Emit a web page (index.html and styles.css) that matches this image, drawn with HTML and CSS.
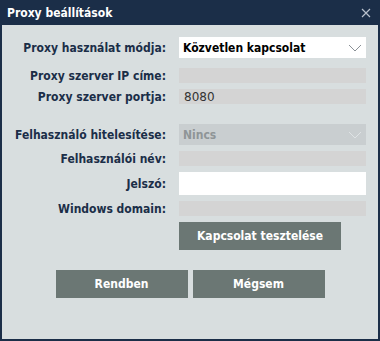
FILE: index.html
```html
<!DOCTYPE html>
<html>
<head>
<meta charset="utf-8">
<link rel="stylesheet" href="styles.css">
</head>
<body>
<div class="window">
  <div class="titlebar">
    <span class="title">Proxy beállítások</span>
    <svg class="close" width="10" height="10" viewBox="0 0 10 10"><path d="M1 1L9 9M9 1L1 9" stroke="#b8c0cc" stroke-width="1.2" fill="none"/></svg>
  </div>
  <div class="content">
    <div class="row first">
      <div class="label">Proxy használat módja:</div>
      <div class="select"><span>Közvetlen kapcsolat</span><svg class="chev" width="14" height="8" viewBox="0 0 14 8"><path d="M1 1L7 7L13 1" stroke="#8a9096" stroke-width="1" fill="none"/></svg></div>
    </div>
    <div class="row wide-gap-before">
      <div class="label">Proxy szerver IP címe:</div>
      <div class="field"></div>
    </div>
    <div class="row">
      <div class="label">Proxy szerver portja:</div>
      <div class="field"><span class="value">8080</span></div>
    </div>
    <div class="row section">
      <div class="label">Felhasználó hitelesítése:</div>
      <div class="select disabled"><span>Nincs</span><svg class="chev" width="14" height="8" viewBox="0 0 14 8"><path d="M1 1L7 7L13 1" stroke="#dfe3e5" stroke-width="1" fill="none"/></svg></div>
    </div>
    <div class="row">
      <div class="label">Felhasználói név:</div>
      <div class="field"></div>
    </div>
    <div class="row">
      <div class="label">Jelszó:</div>
      <div class="field white"></div>
    </div>
    <div class="row">
      <div class="label">Windows domain:</div>
      <div class="field"></div>
    </div>
    <div class="row">
      <div class="label"></div>
      <div class="btn test">Kapcsolat tesztelése</div>
    </div>
    <div class="actions">
      <div class="btn action">Rendben</div>
      <div class="btn action">Mégsem</div>
    </div>
  </div>
</div>
</body>
</html>
```
FILE: styles.css
```css
html, body {
  margin: 0;
  padding: 0;
  background: #1b2e48;
}
body {
  font-family: "DejaVu Sans Condensed", "DejaVu Sans", sans-serif;
  font-stretch: condensed;
  font-size: 12px;
}
.window {
  width: 380px;
  height: 341px;
  box-sizing: border-box;
  background: #1b2e48;
  padding: 0 2px 2px 2px;
  display: flex;
  flex-direction: column;
}
.titlebar {
  height: 25px;
  flex: none;
  display: flex;
  align-items: center;
  justify-content: space-between;
  padding: 0 7px 0 5px;
}
.title {
  color: #ffffff;
  font-weight: bold;
  font-size: 12px;
}
.close {
  display: block;
}
.content {
  flex: 1;
  background: #d8dedf;
  padding-top: 12px;
  display: flex;
  flex-direction: column;
  gap: 6px;
}
.row {
  display: grid;
  grid-template-columns: 164px 187px;
  column-gap: 13px;
  align-items: center;
}
.row.wide-gap-before {
  margin-top: 4px;
}
.row.section {
  margin-top: 14px;
}
.label {
  text-align: right;
  color: #1b2e48;
  font-weight: bold;
  white-space: nowrap;
}
.select {
  height: 21px;
  background: #ffffff;
  display: flex;
  align-items: center;
  justify-content: space-between;
  padding: 0 4px 0 4px;
  box-sizing: border-box;
  font-weight: bold;
  color: #000000;
}
.select.disabled {
  background: #c9ced0;
  color: #8f9597;
}
.chev {
  display: block;
}
.field {
  height: 15px;
  background: #d4d4d4;
  display: flex;
  align-items: center;
  padding-left: 5px;
  box-sizing: border-box;
}
.field.white {
  height: 23px;
  background: #ffffff;
}
.value {
  font-family: "DejaVu Sans", sans-serif;
  font-stretch: normal;
  font-size: 12px;
  color: #333333;
}
.btn {
  background: #6b7774;
  color: #ffffff;
  font-weight: bold;
  display: flex;
  align-items: center;
  justify-content: center;
  height: 28px;
}
.btn.test {
  width: 162px;
}
.actions {
  display: flex;
  justify-content: center;
  gap: 5px;
  margin-top: 14px;
}
.btn.action {
  width: 132px;
}
```
